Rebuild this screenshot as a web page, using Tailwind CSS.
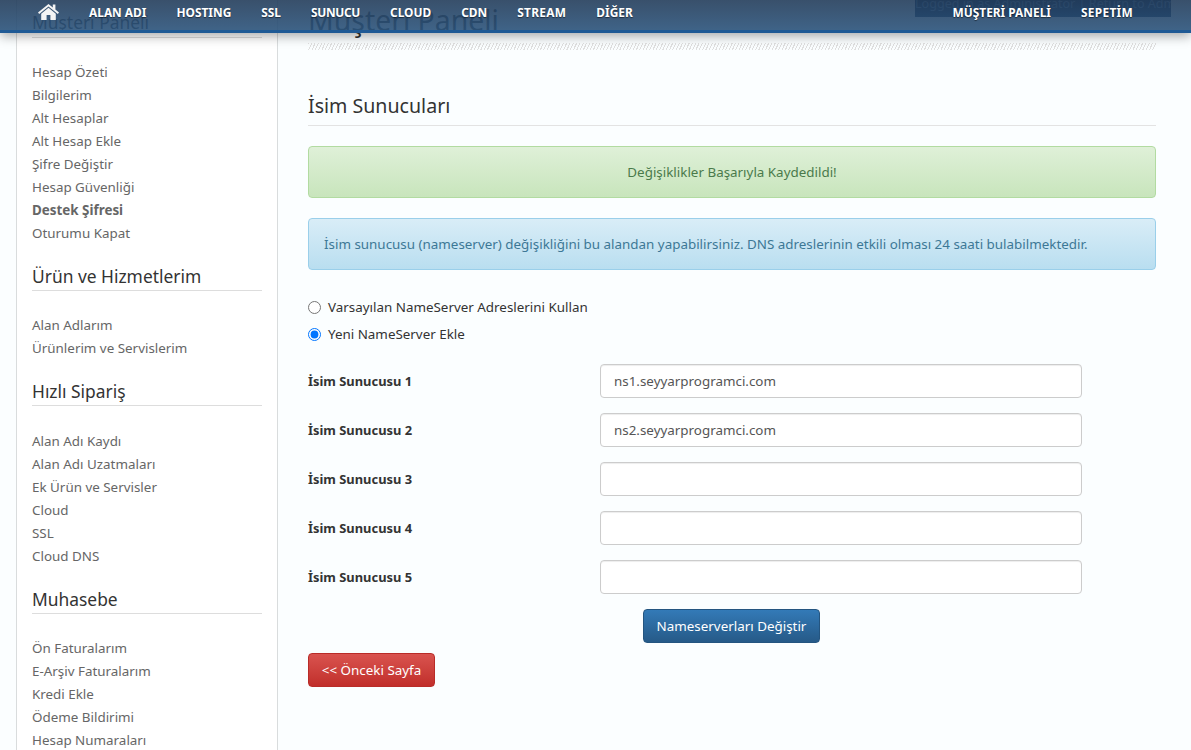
<!DOCTYPE html>
<html lang="tr">
<head>
  <meta charset="UTF-8">
  <meta name="viewport" content="width=device-width, initial-scale=1.0">
  <title>İsim Sunucuları</title>
  <script src="https://cdn.jsdelivr.net/npm/@tailwindcss/browser@4"></script>
</head>
<body class="bg-[#fbfeff] font-['Noto_Sans',sans-serif] text-[13.4px] text-[#666]">
  <div class="relative h-[750px] overflow-hidden">

    <!-- Top nav -->
    <nav class="absolute top-0 left-0 right-0 z-20 h-[33px] border-b-[3px] border-[#1f5a95] bg-gradient-to-b from-[#233d5b]/90 to-[#2a527a]/90 shadow-[0_3px_12px_rgba(0,0,0,0.35)]">
      <div class="flex items-center h-[30px] pb-[5px] text-white text-[11.9px] font-bold uppercase [text-shadow:0_1px_1px_rgba(0,0,0,0.5)]">
        <a class="ml-[38px] w-[21px] -mt-[2px]">
          <svg width="21" height="16" viewBox="0 0 21 16" class="mt-[1px]"><path fill="#f4f4f4" d="M10.5 0 L0 8.6 L1.2 10 L10.5 2.4 L19.8 10 L21 8.6 L17.4 5.6 V0.6 H14.8 V3.4 Z M10.5 3.8 L3.2 9.8 V16 H8.6 V11 H12.4 V16 H17.8 V9.8 Z"/></svg>
        </a>
        <div class="flex gap-[30px] ml-[30px]">
          <a>ALAN ADI</a><a>HOSTING</a><a>SSL</a><a class="tracking-[-0.3px]">SUNUCU</a><a>CLOUD</a><a>CDN</a><a class="tracking-[0.3px]">STREAM</a><a>DİĞER</a>
        </div>
        <div class="flex gap-[30px] ml-auto mr-[58px]">
          <a>MÜŞTERİ PANELİ</a><a class="tracking-[0.3px]">SEPETİM</a>
        </div>
      </div>
    </nav>
    <div class="absolute top-0 left-[915px] z-10 w-[256px] h-[17px] bg-[#0c2a55] text-[12.6px] leading-[8px] text-center text-[#5f86b3] whitespace-nowrap overflow-hidden">Logged in as Administrator | Return to Admin Area</div>

    <div class="flex items-start">
      <!-- Sidebar -->
      <aside class="ml-[16px] w-[262px] h-[750px] shrink-0 bg-white border-x border-[#d9dcdd] pl-[15px] pr-[15px]">
        <h3 class="mt-[10px] h-[28px] leading-[24px] text-[17.4px] text-[#333] border-b border-[#ddd]">Müşteri Paneli</h3>
        <ul class="mt-[23px] leading-[23px]">
          <li>Hesap Özeti</li>
          <li>Bilgilerim</li>
          <li>Alt Hesaplar</li>
          <li>Alt Hesap Ekle</li>
          <li>Şifre Değiştir</li>
          <li>Hesap Güvenliği</li>
          <li class="font-bold">Destek Şifresi</li>
          <li>Oturumu Kapat</li>
        </ul>
        <h3 class="mt-[18px] h-[28px] leading-[26px] text-[17.4px] text-[#333] border-b border-[#ddd]">Ürün ve Hizmetlerim</h3>
        <ul class="mt-[23px] leading-[23px]">
          <li>Alan Adlarım</li>
          <li>Ürünlerim ve Servislerim</li>
        </ul>
        <h3 class="mt-[18px] h-[28px] leading-[26px] text-[17.4px] text-[#333] border-b border-[#ddd]">Hızlı Sipariş</h3>
        <ul class="mt-[24px] leading-[23px]">
          <li>Alan Adı Kaydı</li>
          <li>Alan Adı Uzatmaları</li>
          <li>Ek Ürün ve Servisler</li>
          <li>Cloud</li>
          <li>SSL</li>
          <li>Cloud DNS</li>
        </ul>
        <h3 class="mt-[18px] h-[28px] leading-[26px] text-[17.4px] text-[#333] border-b border-[#ddd]">Muhasebe</h3>
        <ul class="mt-[23px] leading-[23px]">
          <li>Ön Faturalarım</li>
          <li>E-Arşiv Faturalarım</li>
          <li>Kredi Ekle</li>
          <li>Ödeme Bildirimi</li>
          <li>Hesap Numaraları</li>
        </ul>
      </aside>

      <!-- Main -->
      <main class="ml-[30px] w-[848px] shrink-0">
        <h1 class="h-[43px] leading-[40px] text-[28.4px] text-[#333]">Müşteri Paneli</h1>
        <div class="h-[7px] bg-[repeating-linear-gradient(115deg,#e0e0e0_0,#e0e0e0_1px,transparent_1px,transparent_3px)]"></div>

        <h2 class="mt-[41px] h-[35px] leading-[30px] text-[19.6px] text-[#333] border-b border-[#e3e3e3]">İsim Sunucuları</h2>

        <div class="mt-[20px] h-[52px] flex items-center justify-center rounded-[4px] border border-[#b2dba1] bg-gradient-to-b from-[#dff0d8] to-[#c8e5bc] text-[#4a7a4b]">Değişiklikler Başarıyla Kaydedildi!</div>
        <div class="mt-[20px] h-[52px] flex items-center pl-[15px] rounded-[4px] border border-[#9acfea] bg-gradient-to-b from-[#d9edf7] to-[#b9def0] text-[#3d7896]">İsim sunucusu (nameserver) değişikliğini bu alandan yapabilirsiniz. DNS adreslerinin etkili olması 24 saati bulabilmektedir.</div>

        <div class="mt-[27px] flex flex-col gap-[7px] text-[#333]">
          <label class="flex items-center gap-[7px] h-[20px]"><input type="radio" name="ns" class="w-[13px] h-[13px] m-0"> Varsayılan NameServer Adreslerini Kullan</label>
          <label class="flex items-center gap-[7px] h-[20px]"><input type="radio" name="ns" checked class="w-[13px] h-[13px] m-0"> Yeni NameServer Ekle</label>
        </div>

        <div class="mt-[20px] flex flex-col gap-[15px]">
          <div class="flex items-center h-[34px]"><label class="w-[292px] pt-[2px] text-[12.9px] font-bold text-[#333]">İsim Sunucusu 1</label><input value="ns1.seyyarprogramci.com" class="w-[482px] h-[34px] px-[13px] bg-white text-[#555] border border-[#ccc] rounded-[4px] shadow-[inset_0_1px_1px_rgba(0,0,0,0.075)]"></div>
          <div class="flex items-center h-[34px]"><label class="w-[292px] pt-[2px] text-[12.9px] font-bold text-[#333]">İsim Sunucusu 2</label><input value="ns2.seyyarprogramci.com" class="w-[482px] h-[34px] px-[13px] bg-white text-[#555] border border-[#ccc] rounded-[4px] shadow-[inset_0_1px_1px_rgba(0,0,0,0.075)]"></div>
          <div class="flex items-center h-[34px]"><label class="w-[292px] pt-[2px] text-[12.9px] font-bold text-[#333]">İsim Sunucusu 3</label><input class="w-[482px] h-[34px] px-[13px] bg-white text-[#555] border border-[#ccc] rounded-[4px] shadow-[inset_0_1px_1px_rgba(0,0,0,0.075)]"></div>
          <div class="flex items-center h-[34px]"><label class="w-[292px] pt-[2px] text-[12.9px] font-bold text-[#333]">İsim Sunucusu 4</label><input class="w-[482px] h-[34px] px-[13px] bg-white text-[#555] border border-[#ccc] rounded-[4px] shadow-[inset_0_1px_1px_rgba(0,0,0,0.075)]"></div>
          <div class="flex items-center h-[34px]"><label class="w-[292px] pt-[2px] text-[12.9px] font-bold text-[#333]">İsim Sunucusu 5</label><input class="w-[482px] h-[34px] px-[13px] bg-white text-[#555] border border-[#ccc] rounded-[4px] shadow-[inset_0_1px_1px_rgba(0,0,0,0.075)]"></div>
        </div>

        <div class="mt-[15px] pl-[335px]">
          <button class="w-[177px] h-[34px] rounded-[4px] border border-[#245580] bg-gradient-to-b from-[#337ab7] to-[#265a88] text-white">Nameserverları Değiştir</button>
        </div>
        <button class="mt-[10px] block w-[127px] h-[34px] rounded-[4px] border border-[#b92c28] bg-gradient-to-b from-[#d9534f] to-[#c12e2a] text-white">&lt;&lt; Önceki Sayfa</button>
      </main>
    </div>
  </div>
</body>
</html>
